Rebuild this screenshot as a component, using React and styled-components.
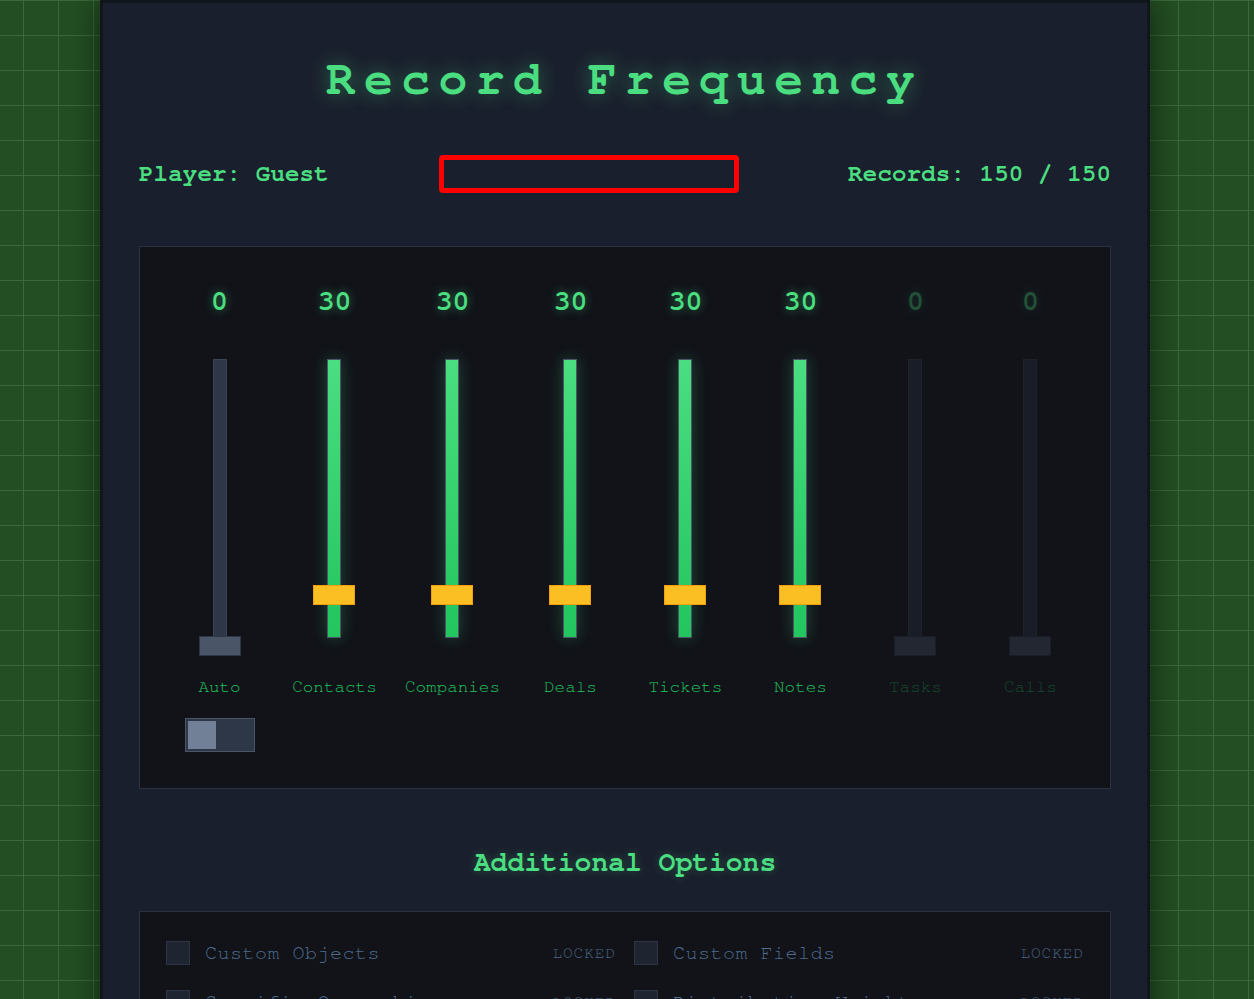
import React from "react";
import styled, { createGlobalStyle } from "styled-components";

const GlobalStyle = createGlobalStyle`
  html, body {
    margin: 0;
    padding: 0;
  }
  body {
    background-color: #234e23;
    background-image:
      linear-gradient(to right, #396839 1px, transparent 1px),
      linear-gradient(to bottom, #396839 1px, transparent 1px);
    background-size: 35px 35px;
    background-position: 23px 0;
    font-family: "Nimbus Mono PS", "Nimbus Mono L", "FreeMono", Courier, "Courier New", monospace;
  }
`;

const Page = styled.div`
  display: flex;
  justify-content: center;
  padding-right: 4px;
`;

const Panel = styled.main`
  box-sizing: border-box;
  width: 1050px;
  min-height: 100vh;
  background: #1a1f2d;
  border: 3px solid #11151c;
  border-bottom: none;
  padding: 36px 36px 60px;
  box-shadow: 0 0 30px rgba(0, 0, 0, 0.55);
`;

const Title = styled.h1`
  margin: 14px 0 0;
  text-align: center;
  font-size: 48px;
  line-height: 54px;
  font-weight: bold;
  letter-spacing: 8.5px;
  color: #4ade80;
  text-shadow: 0 0 20px rgba(74, 222, 128, 0.45);
`;

const InfoRow = styled.div`
  margin-top: 48px;
  display: flex;
  align-items: center;
  justify-content: space-between;
  height: 38px;
`;

const InfoText = styled.div`
  font-size: 24px;
  font-weight: bold;
  letter-spacing: 0.2px;
  color: #4ade80;
`;

const NameBox = styled.div`
  box-sizing: border-box;
  width: 300px;
  height: 38px;
  border: 5px solid #ff0000;
  border-radius: 4px;
  background: #1a1f2d;
`;

const Mixer = styled.section`
  margin-top: 53px;
  border: 1px solid #2b3142;
  background: #111319;
  padding: 36px 35px;
  display: flex;
  justify-content: space-between;
  align-items: flex-start;
`;

const Channel = styled.div`
  min-width: 89px;
  display: flex;
  flex-direction: column;
  align-items: center;
  opacity: ${(p) => (p.$disabled ? 0.3 : 1)};
`;

const Value = styled.div`
  font-size: 28px;
  font-weight: bold;
  line-height: 36px;
  height: 36px;
  margin-top: 1px;
  color: #4ade80;
  text-shadow: 0 0 10px rgba(74, 222, 128, 0.5);
`;

const SliderArea = styled.div`
  position: relative;
  margin-top: 39px;
  width: 42px;
  height: 297px;
`;

const Track = styled.div`
  box-sizing: border-box;
  width: 14px;
  height: 279px;
  margin: 0 auto;
  border: 1px solid ${(p) => (p.$active ? "#4a5568" : "#3b4556")};
  background: ${(p) =>
    p.$active ? "linear-gradient(to bottom, #4ade80, #22c55e)" : "#2d3748"};
  box-shadow: ${(p) =>
    p.$active ? "0 0 16px rgba(74, 222, 128, 0.28)" : "none"};
`;

const Handle = styled.div`
  position: absolute;
  left: 0;
  box-sizing: border-box;
  width: 42px;
  height: 20px;
  background: ${(p) => (p.$active ? "#fbbf24" : "#4a5568")};
  border: 1px solid ${(p) => (p.$active ? "#f59e0b" : "#2d3748")};
`;

const Label = styled.div`
  margin-top: 21px;
  font-size: 17.6px;
  line-height: 20px;
  color: #22c55e;
  white-space: nowrap;
`;

const Toggle = styled.div`
  box-sizing: border-box;
  margin-top: 21px;
  width: 70px;
  height: 34px;
  border: 1px solid #4a5568;
  background: #2d3748;
  padding: 2px;
`;

const Knob = styled.div`
  width: 28px;
  height: 28px;
  background: #718096;
`;

const SectionTitle = styled.h2`
  margin: 58px 0 0;
  text-align: center;
  font-size: 28px;
  line-height: 32px;
  font-weight: bold;
  color: #4ade80;
  text-shadow: 0 0 10px rgba(74, 222, 128, 0.3);
`;

const OptionsBox = styled.section`
  margin-top: 32px;
  border: 1px solid #2b3142;
  background: #111319;
  padding: 29px 26px;
  display: grid;
  grid-template-columns: 1fr 1fr;
  column-gap: 18px;
  row-gap: 25px;
`;

const OptionRow = styled.div`
  display: flex;
  align-items: center;
  height: 24px;
`;

const Checkbox = styled.div`
  box-sizing: border-box;
  width: 24px;
  height: 24px;
  border: 1px solid #2d3545;
  background: #1f2530;
  margin-right: 15px;
  flex-shrink: 0;
`;

const OptionText = styled.span`
  font-size: 20px;
  letter-spacing: 0.5px;
  color: #4e6c8e;
`;

const Locked = styled.span`
  margin-left: auto;
  font-size: 16px;
  letter-spacing: 1px;
  color: #4c6584;
`;

const channels = [
  { name: "Auto", value: 0, auto: true },
  { name: "Contacts", value: 30 },
  { name: "Companies", value: 30 },
  { name: "Deals", value: 30 },
  { name: "Tickets", value: 30 },
  { name: "Notes", value: 30 },
  { name: "Tasks", value: 0, disabled: true },
  { name: "Calls", value: 0, disabled: true },
];

const options = [
  "Custom Objects",
  "Custom Fields",
  "Specific Ownership",
  "Distribution Weights",
  "Associations",
  "Activity Timeline",
];

export default function App() {
  return (
    <>
      <GlobalStyle />
      <Page>
        <Panel>
          <Title>Record Frequency</Title>
          <InfoRow>
            <InfoText>Player: Guest</InfoText>
            <NameBox />
            <InfoText>Records: 150 / 150</InfoText>
          </InfoRow>
          <Mixer>
            {channels.map((c) => {
              const active = c.value > 0;
              return (
                <Channel key={c.name} $disabled={c.disabled}>
                  <Value>{c.value}</Value>
                  <SliderArea>
                    <Track $active={active} />
                    <Handle
                      $active={active}
                      style={{ bottom: `${(c.value / 150) * 255}px` }}
                    />
                  </SliderArea>
                  <Label>{c.name}</Label>
                  {c.auto && (
                    <Toggle>
                      <Knob />
                    </Toggle>
                  )}
                </Channel>
              );
            })}
          </Mixer>
          <SectionTitle>Additional Options</SectionTitle>
          <OptionsBox>
            {options.map((o) => (
              <OptionRow key={o}>
                <Checkbox />
                <OptionText>{o}</OptionText>
                <Locked>LOCKED</Locked>
              </OptionRow>
            ))}
          </OptionsBox>
        </Panel>
      </Page>
    </>
  );
}
